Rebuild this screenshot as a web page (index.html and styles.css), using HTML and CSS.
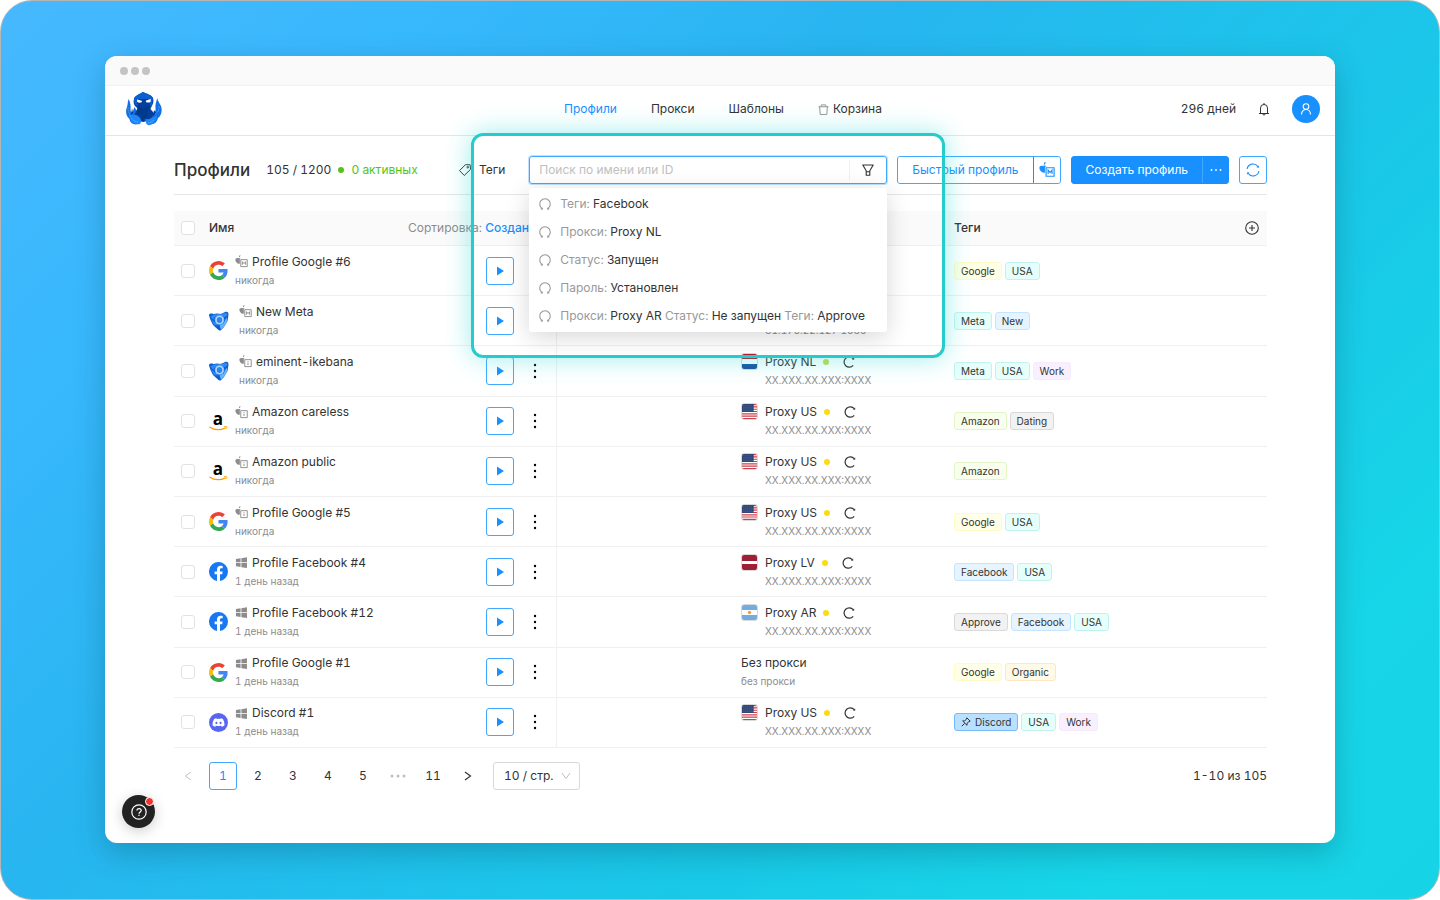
FILE: index.html
```html
<!DOCTYPE html>
<html lang="ru">
<head>
    <meta charset="UTF-8">
    <meta name="viewport" content="width=device-width, initial-scale=1.0">
    <title>Профили</title>
    <link rel="stylesheet" href="styles.css">
</head>
<body>
    <!-- Иконки -->
    <svg class="sprite" aria-hidden="true">
        <symbol id="google" viewBox="0 0 48 48">
            <path fill="#ea4335" d="M24 9.500c3.500 0 6.700 1.200 9.200 3.600l6.900-6.900C35.900 2.400 30.500 0 24 0 14.600 0 6.500 5.400 2.600 13.200l8 6.200C12.400 13.700 17.700 9.500 24 9.500z"/>
            <path fill="#4285f4" d="M47 24.600c0-1.600-.2-3.100-.4-4.600H24v9h12.900c-.6 3-2.200 5.500-4.700 7.200l7.700 6C44.400 38 47 31.900 47 24.600z"/>
            <path fill="#fbbc05" d="M10.500 28.600c-.5-1.500-.8-3-.8-4.600s.3-3.100.8-4.600l-8-6.200C.9 16.500 0 20.100 0 24s.9 7.500 2.600 10.800l7.900-6.200z"/>
            <path fill="#34a853" d="M24 48c6.500 0 11.900-2.100 15.900-5.800l-7.700-6c-2.200 1.500-4.900 2.300-8.200 2.300-6.300 0-11.600-4.200-13.500-9.900l-8 6.200C6.500 42.600 14.600 48 24 48z"/>
        </symbol>
        <symbol id="browser" viewBox="0 0 20 20">
            <path fill="#0d5fd0" d="M0 4.500C0 2.300 2 2.200 4.500 3L8 2.600 12 3 16 1c2.500-.9 4 .6 3.400 3.500L18.500 10l-3.500 6-3 3c-1 .8-2 .6-2.800-.2L4 14 1.500 9z"/>
            <path fill="#2f8cf5" d="M1.500 5.500 5 3.500l5.500-.5L17.500 2l1 2-2.500 2-6-1.500C7 4.500 5 6 4.500 9z"/>
            <path fill="#67b4ff" d="M17.500 6.500c1.500 3-.3 6.500-2.500 9l-3 3-1.500-4 4-2z"/>
            <path fill="#2f8cf5" d="m2 8 3 6 4 .5z"/>
            <circle cx="10.500" cy="9" r="4.800" fill="#7cbcfd"/>
            <circle cx="10.500" cy="9" r="3.700" fill="#d3e9ff"/>
            <circle cx="10.500" cy="9" r="2.900" fill="#2b86f3"/>
        </symbol>
        <symbol id="amazon" viewBox="0 0 20 20">
            <text class="amazon-letter" x="4" y="14">a</text>
            <path fill="none" stroke="#f90" stroke-width="1.300" stroke-linecap="round" d="M1 16c5 3.400 11.500 3.400 16 .8"/>
            <path fill="none" stroke="#f90" stroke-width=".9" stroke-linecap="round" d="M16 15.500c1.200-.4 2.600-.3 2.800 0s-.1 1.500-.9 2.200"/>
        </symbol>
        <symbol id="facebook" viewBox="0 0 24 24">
            <circle cx="12" cy="12" r="11" fill="#fff"/>
            <path fill="#1877f2" d="M24 12a12 12 0 1 0-13.900 11.900v-8.400h-3V12h3V9.400c0-3 1.800-4.700 4.500-4.700 1.300 0 2.700.2 2.700.2v3h-1.500c-1.500 0-2 .9-2 1.900V12h3.400l-.5 3.500h-2.800v8.400A12 12 0 0 0 24 12z"/>
        </symbol>
        <symbol id="discord" viewBox="0 0 24 24">
            <circle cx="12" cy="12" r="12" fill="#5865f2"/>
            <path fill="#fff" d="M17.500 7.600a11 11 0 0 0-2.900-.9l-.4.800a10 10 0 0 0-4.400 0l-.4-.8a11 11 0 0 0-2.900.9C4.700 10.400 4.300 13.100 4.500 15.800a11 11 0 0 0 3.500 1.700l.8-1.300-1.200-.6.300-.2a8.500 8.500 0 0 0 8.200 0l.3.200-1.200.6.800 1.300a11 11 0 0 0 3.500-1.700c.3-3.200-.5-5.800-2-8.200zM9.400 14.100c-.7 0-1.300-.7-1.300-1.500s.6-1.500 1.300-1.500 1.300.7 1.300 1.500-.6 1.500-1.300 1.500zm5.200 0c-.7 0-1.300-.7-1.300-1.500s.6-1.500 1.300-1.500 1.300.7 1.300 1.500-.6 1.500-1.300 1.500z"/>
        </symbol>
        <symbol id="mac-m" viewBox="0 0 14 14">
            <path fill="currentColor" d="M4.200 2.400C4.100 1.100 4.800.4 5.800.1c.1 1.200-.4 2.100-1.600 2.300zM.7 4c.9-1.100 2-.9 2.900-.5C4.600 3 5.900 3 6.800 3.900H5.200v5.400c-1.100.4-1.900.1-2.700-.5C.8 7.700-.1 5.300.7 4z"/>
            <path fill="none" stroke="currentColor" stroke-width="1" d="M6.200 5h7v7.500h-7zM8 10.500V7.200l1.700 2.100 1.700-2.100v3.300"/>
        </symbol>
        <symbol id="mac-i" viewBox="0 0 14 14">
            <path fill="currentColor" d="M4.200 2.400C4.100 1.100 4.800.4 5.800.1c.1 1.200-.4 2.100-1.600 2.300zM.7 4c.9-1.100 2-.9 2.900-.5C4.600 3 5.900 3 6.800 3.900H5.200v5.400c-1.100.4-1.900.1-2.700-.5C.8 7.700-.1 5.300.7 4z"/>
            <path fill="none" stroke="currentColor" stroke-width="1" d="M6.200 5h7v7.500h-7zM9.700 8.300v2.500M9.700 6.600v.9"/>
        </symbol>
        <symbol id="windows" viewBox="0 0 14 14">
            <path fill="currentColor" d="M1 3.200 6 2.500v4.200H1zM6.900 2.300l6-.9v5.300h-6zM1 7.600h5v4.200l-5-.7zM6.900 7.600h6v5.300l-6-.9z"/>
        </symbol>
        <symbol id="play" viewBox="0 0 10 12"><path fill="currentColor" d="m2 1.500 7 4.500-7 4.500z"/></symbol>
        <symbol id="dots" viewBox="0 0 4 16">
            <circle cx="2" cy="2" r="1.200"/><circle cx="2" cy="8" r="1.200"/><circle cx="2" cy="14" r="1.200"/>
        </symbol>
        <symbol id="reload" viewBox="0 0 14 14">
            <path fill="none" stroke="currentColor" stroke-width="1.200" d="M11.200 10.400A5.200 5.200 0 1 1 11.200 3.600"/>
            <path fill="currentColor" d="M12.200 2.400v2.400l-2.300-.4z"/>
        </symbol>
        <symbol id="history" viewBox="0 0 14 14">
            <path fill="none" stroke="currentColor" stroke-width="1.100" d="M2.600 12h1.800v-1.300M4.200 11.500a5.300 5.300 0 1 1 5.600 0M11.400 12H9.600v-1.300"/>
        </symbol>
        <symbol id="flag-us" viewBox="0 0 18 18">
            <path fill="#fff" d="M0 0h18v18H0z"/>
            <path stroke="#c9414c" stroke-width="1.300" d="M0 .7h18M0 3.400h18M0 6.200h18M0 9h18M0 11.800h18M0 14.500h18M0 17.300h18"/>
            <path fill="#2f4777" d="M0 0h14v9.500H0z"/>
            <path stroke="#7d8db0" stroke-width=".7" stroke-dasharray=".8 1.600" d="M1 2h12M2 4h11M1 6h12M2 8h11"/>
        </symbol>
        <symbol id="flag-nl" viewBox="0 0 18 18">
            <path fill="#fff" d="M0 0h18v18H0z"/><path fill="#ae1c28" d="M0 0h18v6H0z"/><path fill="#1a50a0" d="M0 12h18v6H0z"/>
        </symbol>
        <symbol id="flag-lv" viewBox="0 0 18 18">
            <path fill="#9e2034" d="M0 0h18v18H0z"/><path fill="#fff" d="M0 7.200h18v3.600H0z"/>
        </symbol>
        <symbol id="flag-ar" viewBox="0 0 18 18">
            <path fill="#74acdf" d="M0 0h18v18H0z"/><path fill="#fff" d="M0 6h18v6H0z"/><circle cx="9" cy="9" r="2" fill="#e8a33a"/>
        </symbol>
    </svg>

    <div class="stage">
        <div class="window">
            <div class="titlebar"><span></span><span></span><span></span></div>

            <header class="header">
                <a href="#" class="logo" aria-label="Главная">
                    <svg viewBox="0 0 36 34" width="36" height="34">
                        <path fill="#1170e4" d="M2.500 7C4 10 5 13 4.500 17c0 3 1 4.500 2.500 2l1.500-4 4.500 8-1 9c-4 1.500-8-1-8.500-5C0 24-.5 20 .6 16 2 13 1.500 10 2.500 7z"/>
                        <path fill="#1170e4" d="M31.500 6c-1.500 4-2.500 7-2 10 .6 4-2 7-3.500 3l-3 5 1 8c4 1 7-2 8-6 3-2 4-6 3.500-10C35 12 31.500 10 31.500 6z"/>
                        <path fill="#053f9a" d="M8 7C9 3.500 13 3 17 0c4 2 8 2.500 10 6 1.500 5-1.500 8-2.500 11l4 5-5 6-6 2-5-1-5-4 4-9C8 14 7 11 8 7z"/>
                        <path fill="#0c5fd0" d="M8 6c2-3 5-3.500 9-6 4 2.500 8 3 10 6l-1 7c0 1-1 2-2 1 1-5-1-7-3-7h-7c-3 0-4 3-2 7-3 0-4-4-4-8z"/>
                        <path fill="#fff" d="m11 7.500 4.800 1.200c1 1.800-2.400 2.600-4.600 1.300zM24.800 7 20 8.400c-1 2 2.200 2.600 4.600 1.500z"/>
                        <path fill="#1f87f8" d="M3 22c4 2 6-1 10 3 2 2 3 4 1 7-4 1-8-1-9-3zM19 27c5 1 9-2 12-4 0 5-3 9-7 10-3 1-4-1-5-6z"/>
                        <path fill="#003a8c" d="m12 13 5 4 6-3-2 9 3 4-5-1-3 3-1-5-4-2zM6 16l1 5-2 2zM28 18l2 3-3 3z"/>
                        <path stroke="#7fc0ff" stroke-width=".8" stroke-linecap="round" stroke-dasharray=".4 2" fill="none" d="M4 24c2 4 5 6 9 6M2 16c0 3 1 5 2 6M33 15c0 4-2 6-4 7M20 31c4 0 7-1 8-4"/>
                    </svg>
                </a>
                <nav class="nav">
                    <a href="#" class="active">Профили</a>
                    <a href="#">Прокси</a>
                    <a href="#">Шаблоны</a>
                    <a href="#">
                        <svg viewBox="0 0 12 12" width="11" height="11" fill="none" stroke="#8c8c8c"><path d="M.5 3h11M3.500 2.800V1h5v1.800M1.800 3l.6 8.500h7.200l.6-8.500"/></svg>
                        Корзина
                    </a>
                </nav>
                <div class="account">
                    <span>296 дней</span>
                    <button class="plain" aria-label="Уведомления">
                        <svg viewBox="0 0 12 14" width="12" height="14" fill="none" stroke="currentColor"><path d="M1 11.500h10M2.500 11.500V6a3.500 3.500 0 0 1 7 0v5.500M6 2.500V1M4.800 12c.2 1.400 2.200 1.400 2.400 0"/></svg>
                    </button>
                    <button class="avatar" aria-label="Аккаунт">
                        <svg viewBox="0 0 14 14" width="14" height="14" fill="none" stroke="#fff" stroke-width="1.100"><circle cx="7" cy="4.500" r="2.800"/><path d="M2.500 12.500c0-3 2-5 4.500-5s4.500 2 4.500 5"/></svg>
                    </button>
                </div>
            </header>

            <main class="content">
                <div class="toolbar">
                    <h1>Профили</h1>
                    <span class="count">105 / 1200</span>
                    <span class="online">0 активных</span>
                    <button class="plain tags-btn">
                        <svg viewBox="0 0 14 14" width="14" height="14" fill="none" stroke="currentColor" stroke-linejoin="round"><path d="m1.500 7.600 6-6 4.700.2.300 4.600-6.200 6.100z"/><circle cx="9.800" cy="4.200" r=".8"/></svg>
                        Теги
                    </button>
                    <div class="search">
                        <input type="text" id="search" placeholder="Поиск по имени или ID" aria-label="Поиск по имени или ID">
                        <button class="filter" aria-label="Фильтр">
                            <svg viewBox="0 0 12 12" width="12" height="12" fill="none" stroke="currentColor" stroke-width="1.100" stroke-linejoin="round"><path d="M.8 1h10.400L7.800 6.700v4.500H4.200V6.700zM4.200 7.800h3.600"/></svg>
                        </button>
                        <ul class="suggest">
                            <li><svg width="14" height="14"><use href="#history"/></svg><span>Теги: <b>Facebook</b></span></li>
                            <li><svg width="14" height="14"><use href="#history"/></svg><span>Прокси: <b>Proxy NL</b></span></li>
                            <li><svg width="14" height="14"><use href="#history"/></svg><span>Статус: <b>Запущен</b></span></li>
                            <li><svg width="14" height="14"><use href="#history"/></svg><span>Пароль: <b>Установлен</b></span></li>
                            <li><svg width="14" height="14"><use href="#history"/></svg><span>Прокси: <b>Proxy AR</b> Статус: <b>Не запущен</b> Теги: <b>Approve</b></span></li>
                        </ul>
                        <div class="spotlight"></div>
                    </div>
                    <div class="split">
                        <button>Быстрый профиль</button>
                        <button class="side" aria-label="Система"><svg width="16" height="16"><use href="#mac-m"/></svg></button>
                    </div>
                    <div class="split primary">
                        <button>Создать профиль</button>
                        <button class="side" aria-label="Ещё"><svg viewBox="0 0 12 4" width="12" height="4" fill="#fff"><circle cx="1.500" cy="2" r=".9"/><circle cx="6" cy="2" r=".9"/><circle cx="10.500" cy="2" r=".9"/></svg></button>
                    </div>
                    <button class="box" aria-label="Обновить">
                        <svg viewBox="0 0 14 14" width="14" height="14" fill="none" stroke="currentColor" stroke-width="1.100"><path d="M1.100 6A6 6 0 0 1 12 3.700M12.900 8A6 6 0 0 1 2 10.300"/><path fill="currentColor" d="m12.700 2.800-.2 1.800-1.600-.5zM1.300 11.200l.2-1.800 1.600.5z" stroke-width=".6"/></svg>
                    </button>
                </div>

                <table class="profiles">
                    <colgroup>
                        <col class="c-check"><col class="c-name"><col class="c-note"><col class="c-proxy"><col>
                    </colgroup>
                    <thead>
                        <tr>
                            <th><input type="checkbox" aria-label="Выбрать все"></th>
                            <th><div class="cell"><span>Имя</span><span class="sort">Сортировка: <a href="#">Создан</a></span></div></th>
                            <th></th>
                            <th></th>
                            <th><div class="cell"><span>Теги</span>
                                <button class="plain add" aria-label="Добавить"><svg viewBox="0 0 14 14" width="14" height="14" fill="none" stroke="currentColor" stroke-width="1.100"><circle cx="7" cy="7" r="6.300"/><path d="M7 4v6M4 7h6"/></svg></button></div></th>
                        </tr>
                    </thead>
                    <tbody>
                        <tr>
                            <td><input type="checkbox" aria-label="Profile Google #6"></td>
                            <td><div class="cell">
                                <svg class="site" width="19" height="19"><use href="#google"/></svg>
                                <div class="who"><p><svg width="13" height="13"><use href="#mac-m"/></svg>Profile Google #6</p><small>никогда</small></div>
                                <button class="box" aria-label="Запустить"><svg width="10" height="12"><use href="#play"/></svg></button>
                                <button class="plain more" aria-label="Меню"><svg width="4" height="16"><use href="#dots"/></svg></button>
                            </div></td>
                            <td></td>
                            <td></td>
                            <td><div class="tags"><span class="tag yellow">Google</span><span class="tag cyan">USA</span></div></td>
                        </tr>
                        <tr>
                            <td><input type="checkbox" aria-label="New Meta"></td>
                            <td><div class="cell">
                                <svg class="site wide" width="20" height="20"><use href="#browser"/></svg>
                                <div class="who"><p><svg width="13" height="13"><use href="#mac-m"/></svg>New Meta</p><small>никогда</small></div>
                                <button class="box" aria-label="Запустить"><svg width="10" height="12"><use href="#play"/></svg></button>
                                <button class="plain more" aria-label="Меню"><svg width="4" height="16"><use href="#dots"/></svg></button>
                            </div></td>
                            <td></td>
                            <td><div class="proxy"><svg class="flag" width="17" height="17"><use href="#flag-ar"/></svg><div><p>&nbsp;</p><small>81.176.22.127 1080</small></div></div></td>
                            <td><div class="tags"><span class="tag cyan">Meta</span><span class="tag blue">New</span></div></td>
                        </tr>
                        <tr>
                            <td><input type="checkbox" aria-label="eminent-ikebana"></td>
                            <td><div class="cell">
                                <svg class="site wide" width="20" height="20"><use href="#browser"/></svg>
                                <div class="who"><p><svg width="13" height="13"><use href="#mac-i"/></svg>eminent-ikebana</p><small>никогда</small></div>
                                <button class="box" aria-label="Запустить"><svg width="10" height="12"><use href="#play"/></svg></button>
                                <button class="plain more" aria-label="Меню"><svg width="4" height="16"><use href="#dots"/></svg></button>
                            </div></td>
                            <td></td>
                            <td><div class="proxy"><svg class="flag" width="17" height="17"><use href="#flag-nl"/></svg><div><p>Proxy NL<i class="dot green"></i><button class="plain" aria-label="Проверить"><svg width="14" height="14"><use href="#reload"/></svg></button></p><small>XX.XXX.XX.XXX:XXXX</small></div></div></td>
                            <td><div class="tags"><span class="tag cyan">Meta</span><span class="tag cyan">USA</span><span class="tag purple">Work</span></div></td>
                        </tr>
                        <tr>
                            <td><input type="checkbox" aria-label="Amazon careless"></td>
                            <td><div class="cell">
                                <svg class="site" width="19" height="19"><use href="#amazon"/></svg>
                                <div class="who"><p><svg width="13" height="13"><use href="#mac-i"/></svg>Amazon careless</p><small>никогда</small></div>
                                <button class="box" aria-label="Запустить"><svg width="10" height="12"><use href="#play"/></svg></button>
                                <button class="plain more" aria-label="Меню"><svg width="4" height="16"><use href="#dots"/></svg></button>
                            </div></td>
                            <td></td>
                            <td><div class="proxy"><svg class="flag" width="17" height="17"><use href="#flag-us"/></svg><div><p>Proxy US<i class="dot"></i><button class="plain" aria-label="Проверить"><svg width="14" height="14"><use href="#reload"/></svg></button></p><small>XX.XXX.XX.XXX:XXXX</small></div></div></td>
                            <td><div class="tags"><span class="tag lime">Amazon</span><span class="tag gray">Dating</span></div></td>
                        </tr>
                        <tr>
                            <td><input type="checkbox" aria-label="Amazon public"></td>
                            <td><div class="cell">
                                <svg class="site" width="19" height="19"><use href="#amazon"/></svg>
                                <div class="who"><p><svg width="13" height="13"><use href="#mac-i"/></svg>Amazon public</p><small>никогда</small></div>
                                <button class="box" aria-label="Запустить"><svg width="10" height="12"><use href="#play"/></svg></button>
                                <button class="plain more" aria-label="Меню"><svg width="4" height="16"><use href="#dots"/></svg></button>
                            </div></td>
                            <td></td>
                            <td><div class="proxy"><svg class="flag" width="17" height="17"><use href="#flag-us"/></svg><div><p>Proxy US<i class="dot"></i><button class="plain" aria-label="Проверить"><svg width="14" height="14"><use href="#reload"/></svg></button></p><small>XX.XXX.XX.XXX:XXXX</small></div></div></td>
                            <td><div class="tags"><span class="tag lime">Amazon</span></div></td>
                        </tr>
                        <tr>
                            <td><input type="checkbox" aria-label="Profile Google #5"></td>
                            <td><div class="cell">
                                <svg class="site" width="19" height="19"><use href="#google"/></svg>
                                <div class="who"><p><svg width="13" height="13"><use href="#mac-i"/></svg>Profile Google #5</p><small>никогда</small></div>
                                <button class="box" aria-label="Запустить"><svg width="10" height="12"><use href="#play"/></svg></button>
                                <button class="plain more" aria-label="Меню"><svg width="4" height="16"><use href="#dots"/></svg></button>
                            </div></td>
                            <td></td>
                            <td><div class="proxy"><svg class="flag" width="17" height="17"><use href="#flag-us"/></svg><div><p>Proxy US<i class="dot"></i><button class="plain" aria-label="Проверить"><svg width="14" height="14"><use href="#reload"/></svg></button></p><small>XX.XXX.XX.XXX:XXXX</small></div></div></td>
                            <td><div class="tags"><span class="tag yellow">Google</span><span class="tag cyan">USA</span></div></td>
                        </tr>
                        <tr>
                            <td><input type="checkbox" aria-label="Profile Facebook #4"></td>
                            <td><div class="cell">
                                <svg class="site" width="19" height="19"><use href="#facebook"/></svg>
                                <div class="who"><p><svg width="13" height="13"><use href="#windows"/></svg>Profile Facebook #4</p><small>1 день назад</small></div>
                                <button class="box" aria-label="Запустить"><svg width="10" height="12"><use href="#play"/></svg></button>
                                <button class="plain more" aria-label="Меню"><svg width="4" height="16"><use href="#dots"/></svg></button>
                            </div></td>
                            <td></td>
                            <td><div class="proxy"><svg class="flag" width="17" height="17"><use href="#flag-lv"/></svg><div><p>Proxy LV<i class="dot"></i><button class="plain" aria-label="Проверить"><svg width="14" height="14"><use href="#reload"/></svg></button></p><small>XX.XXX.XX.XXX:XXXX</small></div></div></td>
                            <td><div class="tags"><span class="tag blue">Facebook</span><span class="tag cyan">USA</span></div></td>
                        </tr>
                        <tr>
                            <td><input type="checkbox" aria-label="Profile Facebook #12"></td>
                            <td><div class="cell">
                                <svg class="site" width="19" height="19"><use href="#facebook"/></svg>
                                <div class="who"><p><svg width="13" height="13"><use href="#windows"/></svg>Profile Facebook #12</p><small>1 день назад</small></div>
                                <button class="box" aria-label="Запустить"><svg width="10" height="12"><use href="#play"/></svg></button>
                                <button class="plain more" aria-label="Меню"><svg width="4" height="16"><use href="#dots"/></svg></button>
                            </div></td>
                            <td></td>
                            <td><div class="proxy"><svg class="flag" width="17" height="17"><use href="#flag-ar"/></svg><div><p>Proxy AR<i class="dot"></i><button class="plain" aria-label="Проверить"><svg width="14" height="14"><use href="#reload"/></svg></button></p><small>XX.XXX.XX.XXX:XXXX</small></div></div></td>
                            <td><div class="tags"><span class="tag gray">Approve</span><span class="tag blue">Facebook</span><span class="tag cyan">USA</span></div></td>
                        </tr>
                        <tr>
                            <td><input type="checkbox" aria-label="Profile Google #1"></td>
                            <td><div class="cell">
                                <svg class="site" width="19" height="19"><use href="#google"/></svg>
                                <div class="who"><p><svg width="13" height="13"><use href="#windows"/></svg>Profile Google #1</p><small>1 день назад</small></div>
                                <button class="box" aria-label="Запустить"><svg width="10" height="12"><use href="#play"/></svg></button>
                                <button class="plain more" aria-label="Меню"><svg width="4" height="16"><use href="#dots"/></svg></button>
                            </div></td>
                            <td></td>
                            <td><div class="proxy"><div><p>Без прокси</p><small>без прокси</small></div></div></td>
                            <td><div class="tags"><span class="tag yellow">Google</span><span class="tag orange">Organic</span></div></td>
                        </tr>
                        <tr>
                            <td><input type="checkbox" aria-label="Discord #1"></td>
                            <td><div class="cell">
                                <svg class="site" width="19" height="19"><use href="#discord"/></svg>
                                <div class="who"><p><svg width="13" height="13"><use href="#windows"/></svg>Discord #1</p><small>1 день назад</small></div>
                                <button class="box" aria-label="Запустить"><svg width="10" height="12"><use href="#play"/></svg></button>
                                <button class="plain more" aria-label="Меню"><svg width="4" height="16"><use href="#dots"/></svg></button>
                            </div></td>
                            <td></td>
                            <td><div class="proxy"><svg class="flag" width="17" height="17"><use href="#flag-us"/></svg><div><p>Proxy US<i class="dot"></i><button class="plain" aria-label="Проверить"><svg width="14" height="14"><use href="#reload"/></svg></button></p><small>XX.XXX.XX.XXX:XXXX</small></div></div></td>
                            <td><div class="tags"><span class="tag pinned"><svg viewBox="0 0 10 10" width="10" height="10" fill="none" stroke="currentColor" stroke-linejoin="round"><path d="M5.800.8 9.200 4.200 7.600 4.700 6.200 6.300 6 8.300 1.700 4 3.700 3.800 5.300 2.400zM3.600 6.400.8 9.200"/></svg>Discord</span><span class="tag cyan">USA</span><span class="tag purple">Work</span></div></td>
                        </tr>
                    </tbody>
                </table>

                <div class="pager">
                    <button class="prev" aria-label="Назад" disabled><svg viewBox="0 0 8 10" width="8" height="10" fill="none" stroke="currentColor"><path d="M7 1 1.500 5 7 9"/></svg></button>
                    <button class="current">1</button>
                    <button>2</button>
                    <button>3</button>
                    <button>4</button>
                    <button>5</button>
                    <button class="gap" aria-label="Далее 5"><svg viewBox="0 0 16 4" width="16" height="4" fill="currentColor"><circle cx="2" cy="2" r="1.500"/><circle cx="8" cy="2" r="1.500"/><circle cx="14" cy="2" r="1.500"/></svg></button>
                    <button>11</button>
                    <button aria-label="Вперёд"><svg viewBox="0 0 8 10" width="8" height="10" fill="none" stroke="currentColor" stroke-width="1.200"><path d="M1 1l5.500 4L1 9"/></svg></button>
                    <div class="per-page">
                        <select aria-label="Записей на странице"><option>10 / стр.</option></select>
                        <svg viewBox="0 0 10 8" width="10" height="8" fill="none" stroke="#bfbfbf"><path d="m1 1 4 5.500L9 1"/></svg>
                    </div>
                    <span class="total">1-10 из 105</span>
                </div>
            </main>

            <button class="help" aria-label="Помощь">
                <svg viewBox="0 0 16 16" width="16" height="16" fill="none" stroke="#fff" stroke-width="1.200"><circle cx="8" cy="8" r="7.200"/><path d="M5.900 6.600c0-2.800 4.300-2.700 4.300 0 0 1.500-2.200 1.500-2.200 3.200M8 10.800V12"/></svg>
            </button>
        </div>
    </div>
</body>
</html>
```
FILE: styles.css
```css
* {
    box-sizing: border-box;
}
body {
    margin: 0;
    background: #fff;
    color: #333;
    font-family: Inter, "Liberation Sans", sans-serif;
    font-size: 12px;
    line-height: 18px;
    font-variant-numeric: tabular-nums;
}
svg {
    flex-shrink: 0;
    display: block;
}
a {
    color: inherit;
    text-decoration: none;
}
p {
    margin: 0;
}
button, input, select {
    font: inherit;
    font-variant-numeric: tabular-nums;
    color: inherit;
}
button {
    display: flex;
    align-items: center;
    justify-content: center;
    padding: 0;
    background: #fff;
    border: none;
    cursor: pointer;
}
.plain {
    background: none;
}
.sprite {
    display: none;
}
.amazon-letter {
    font: bold 18px "Open Sans", sans-serif;
}

/* Фон и окно */
.stage {
    display: flex;
    min-height: 100vh;
    padding: 55px 104px 56px;
    border: 1px solid #b5b5b5;
    border-radius: 32px;
    background: linear-gradient(135deg, #47b8ff 0%, #38b8fd 18%, #28b5f0 38%, #20c0ec 52%, #19c9e7 68%, #17d6e8 85%, #17d3e6 100%);
}
.window {
    position: relative;
    flex: 1;
    background: #fff;
    border-radius: 12px;
    box-shadow: 0 10px 30px rgba(0, 60, 80, 0.28);
}
.titlebar {
    display: flex;
    align-items: center;
    gap: 3px;
    height: 30px;
    padding-left: 15px;
    background: #fafafa;
    border-bottom: 1px solid #f2f2f2;
    border-radius: 12px 12px 0 0;
}
.titlebar span {
    width: 8px;
    height: 8px;
    border-radius: 50%;
    background: #c4c4c4;
}
.header {
    display: grid;
    grid-template-columns: 1fr auto 1fr;
    align-items: center;
    height: 50px;
    padding: 0 15px 3px 21px;
    border-bottom: 1px solid #e6e6e6;
}
.logo {
    width: 36px;
}
.nav {
    display: flex;
    gap: 34px;
}
.nav a {
    display: flex;
    align-items: center;
    gap: 4px;
}
.nav .active {
    color: #1890ff;
}
.account {
    display: flex;
    justify-content: flex-end;
    align-items: center;
    gap: 22px;
}
.avatar {
    width: 28px;
    height: 28px;
    border-radius: 50%;
    background: #1890ff;
}

/* Панель над таблицей */
.content {
    padding: 0 68px 0 69px;
}
.toolbar {
    display: flex;
    align-items: center;
    gap: 10px;
    margin-bottom: 16px;
    padding: 20px 0 10px;
    border-bottom: 1px solid #e6e6e6;
}
.toolbar h1 {
    margin: 0 6px 0 0;
    font-size: 17px;
    font-weight: 500;
}
.online {
    display: flex;
    align-items: center;
    gap: 7px;
    margin-left: -3px;
    color: #52c41a;
}
.online::before {
    content: "";
    width: 6px;
    height: 6px;
    border-radius: 50%;
    background: #52c41a;
}
.tags-btn {
    gap: 7px;
    margin-left: auto;
    margin-right: 14px;
}
.search {
    position: relative;
    display: flex;
    flex: 0 1 358px;
    height: 28px;
    border: 1px solid #40a9ff;
    border-radius: 3px;
    box-shadow: 0 0 0 1px #bfe0ff;
}
.search input {
    flex: 1;
    min-width: 0;
    padding: 0 9px;
    border: none;
    outline: none;
    background: none;
}
.search input::placeholder {
    color: #bfbfbf;
}
.filter {
    width: 37px;
    margin: 3px 0;
    background: none;
    border-left: 1px solid #f0f0f0;
}
.suggest {
    position: absolute;
    z-index: 2;
    top: 31px;
    left: -1px;
    right: -1px;
    margin: 0;
    padding: 2px 0;
    list-style: none;
    background: #fff;
    border-radius: 3px;
    color: #999;
    box-shadow: 0 5px 24px rgba(0, 0, 0, 0.16);
}
.suggest li {
    display: flex;
    align-items: center;
    gap: 8px;
    height: 28px;
    padding: 0 9px;
    white-space: nowrap;
}
.suggest b {
    font-weight: 400;
    color: #333;
}
.spotlight {
    position: absolute;
    z-index: 3;
    top: -24px;
    left: -59px;
    right: -59px;
    height: 225px;
    border: 3px solid #26cccc;
    border-radius: 12px;
    box-shadow: 0 0 26px rgba(38, 214, 214, 0.45);
    pointer-events: none;
}
.split {
    display: flex;
    height: 28px;
    border: 1px solid #40a9ff;
    border-radius: 3px;
    color: #1890ff;
}
.split button {
    padding: 0 14px;
    border-radius: 3px;
    white-space: nowrap;
}
.split .side {
    width: 27px;
    padding: 0;
    border-left: 1px solid #1890ff;
    border-radius: 0 3px 3px 0;
}
.primary {
    background: #1890ff;
    border-color: #1890ff;
    color: #fff;
}
.primary button {
    background: none;
}
.primary .side {
    width: 26px;
    border-left-color: #40a9ff;
}
.box {
    flex-shrink: 0;
    width: 28px;
    height: 28px;
    border: 1px solid #40a9ff;
    border-radius: 3px;
    color: #1890ff;
}

/* Таблица */
.profiles {
    width: 100%;
    height: 537px;
    table-layout: fixed;
    border-collapse: separate;
    border-spacing: 0;
}
.c-check {
    width: 35px;
}
.c-name {
    width: 348px;
}
.c-note {
    width: 184px;
}
.c-proxy {
    width: 213px;
}
th, td {
    padding: 0;
    text-align: left;
    font-weight: 400;
    border-bottom: 1px solid #f0f0f0;
}
th {
    height: 35px;
    background: #fafafa;
    font-weight: 500;
}
td:nth-child(2) {
    border-right: 1px solid #f0f0f0;
}
input[type="checkbox"] {
    appearance: none;
    display: block;
    width: 14px;
    height: 14px;
    margin: 0 0 0 7px;
    background: #fff;
    border: 1px solid #e2e2e2;
    border-radius: 3px;
}
.cell {
    display: flex;
    align-items: center;
}
.sort {
    margin-left: auto;
    margin-right: 28px;
    font-weight: 400;
    color: #8c8c8c;
}
.sort a {
    color: #1890ff;
    font-weight: 500;
}
.add {
    margin-left: auto;
    margin-right: 8px;
}
.who {
    flex: 1;
    margin-left: 7px;
    white-space: nowrap;
}
.wide + .who {
    margin-left: 10px;
}
.who p, .proxy p {
    display: flex;
    align-items: center;
}
.who p svg {
    margin-right: 4px;
    color: #8c8c8c;
}
small {
    display: block;
    font-size: 10px;
    color: #8c8c8c;
}
.more {
    width: 14px;
    margin: 0 14px;
}
.proxy {
    display: flex;
    gap: 7px;
}
.flag {
    border: 1px solid #d9d9d9;
    border-radius: 3px;
}
.dot {
    width: 6px;
    height: 6px;
    margin: 0 13px 0 7px;
    border-radius: 50%;
    background: #fadb14;
}
.dot.green {
    background: #c0dc4a;
}
.tags {
    display: flex;
    gap: 3px;
}
.tag {
    display: flex;
    align-items: center;
    gap: 4px;
    height: 18px;
    padding: 0 6px;
    border: 1px solid;
    border-radius: 3px;
    font-size: 10px;
}
.yellow {
    background: #feffe6;
    border-color: #fffbc4;
}
.cyan {
    background: #e6fffb;
    border-color: #c0f3f0;
}
.blue {
    background: #e6f4ff;
    border-color: #c5e5ff;
}
.purple {
    background: #f9f0ff;
    border-color: #f6eafd;
}
.lime {
    background: #f8ffec;
    border-color: #e2f5c9;
}
.gray {
    background: #f2f2f2;
    border-color: #d9d9d9;
}
.orange {
    background: #fff9e8;
    border-color: #ffe7c2;
}
.pinned {
    background: #bae0ff;
    border-color: #74bcfa;
}

/* Постраничная навигация */
.pager {
    display: flex;
    align-items: center;
    gap: 7px;
    padding-top: 14px;
}
.pager button {
    width: 28px;
    height: 28px;
    border-radius: 3px;
}
.pager .prev, .pager .gap {
    color: #bfbfbf;
}
.pager .current {
    border: 1px solid #40a9ff;
    color: #1890ff;
}
.per-page {
    display: grid;
    align-items: center;
    margin-left: 4px;
}
.per-page select, .per-page svg {
    grid-area: 1 / 1;
}
.per-page svg {
    justify-self: end;
    margin-right: 9px;
    pointer-events: none;
}
.per-page select {
    appearance: none;
    width: 87px;
    height: 28px;
    padding: 0 10px;
    background: #fff;
    border: 1px solid #d9d9d9;
    border-radius: 3px;
}
.total {
    margin-left: auto;
}
.help {
    position: absolute;
    left: 17px;
    bottom: 15px;
    width: 33px;
    height: 33px;
    border-radius: 50%;
    background: #222;
    box-shadow: 0 3px 14px rgba(0, 0, 0, 0.2);
}
.help::after {
    content: "";
    position: absolute;
    top: 2px;
    right: 1px;
    width: 7px;
    height: 7px;
    border: 1px solid #fff;
    border-radius: 50%;
    background: #f5322d;
}
```
